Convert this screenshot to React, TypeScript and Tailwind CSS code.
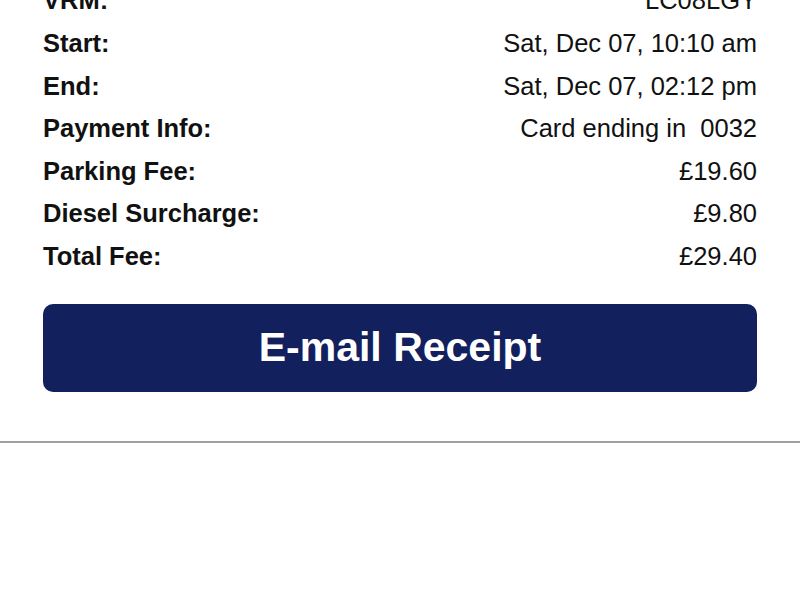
const rows: [string, string][] = [
  ["VRM:", "LC08LGY"],
  ["Start:", "Sat, Dec 07, 10:10 am"],
  ["End:", "Sat, Dec 07, 02:12 pm"],
  ["Payment Info:", "Card ending in  0032"],
  ["Parking Fee:", "£19.60"],
  ["Diesel Surcharge:", "£9.80"],
  ["Total Fee:", "£29.40"],
];

export default function App() {
  return (
    <div className="h-[600px] w-[800px] overflow-hidden bg-white font-['Liberation_Sans',Arial,sans-serif] text-[#111]">
      <div className="-mt-[20.6px] px-[43px]">
        {rows.map(([label, value]) => (
          <div key={label} className="flex h-[42.6px] items-center justify-between text-[25.5px] leading-[42.6px]">
            <span className="font-bold">{label}</span>
            <span className="whitespace-pre">{value}</span>
          </div>
        ))}
        <button
          type="button"
          className="mt-[26.5px] flex h-[88px] w-full items-center justify-center rounded-[10px] bg-[#13205e] text-[41px] font-bold text-white"
        >
          E-mail Receipt
        </button>
      </div>
      <div className="mt-[49px] h-[2px] w-full bg-[#a0a0a0]" />
    </div>
  );
}
